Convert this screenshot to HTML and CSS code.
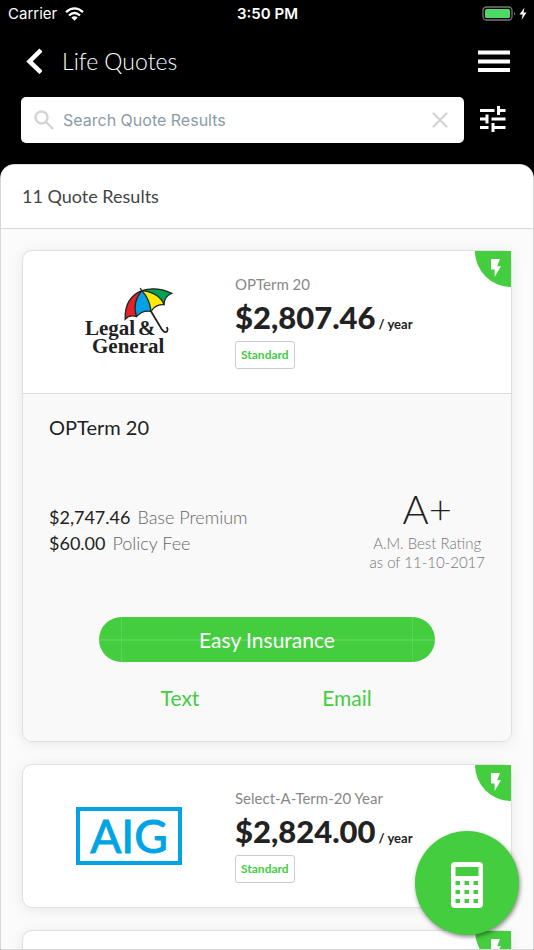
FILE: index.html
```html
<!DOCTYPE html>
<html lang="en">
<head>
<meta charset="utf-8">
<meta name="viewport" content="width=device-width, initial-scale=1">
<title>Life Quotes</title>
<link rel="stylesheet" href="styles.css">
</head>
<body>
<svg class="defs" aria-hidden="true">
  <symbol id="bolt" viewBox="0 0 10 18"><path d="M0 0h9L6.200 7.200H10L3.600 18V10.500H0z" fill="currentColor"/></symbol>
</svg>
<div class="app">
  <header class="top">
    <div class="status">
      <div class="carrier">
        <span>Carrier</span>
        <svg width="19" height="14" viewBox="0 0 19 14" fill="none" stroke="#fff" stroke-width="2.300"><path d="M1 5.200Q9.500-2.400 18 5.200"/><path d="M4 8.500Q9.500 3.500 15 8.500"/><path d="M6.300 10.600Q9.500 7.800 12.700 10.600L9.500 13.800z" fill="#fff" stroke="none"/></svg>
      </div>
      <div class="clock">3:50 PM</div>
      <div class="power">
        <svg width="45" height="16" viewBox="0 0 45 16"><rect x="1" y="1" width="29" height="13" rx="3.500" fill="none" stroke="#777" stroke-width="1.300"/><rect x="3" y="3" width="25" height="9" rx="1.500" fill="#4cd964"/><path d="M32 5.500q1.800 2 0 4z" fill="#888"/><path d="M42.500 1.500L37.500 8.500H40.700L39.500 14L44.500 6.500H41.500z" fill="#fff"/></svg>
      </div>
    </div>
    <div class="nav">
      <button class="icon-btn" type="button" aria-label="Back"><svg width="18" height="26" viewBox="0 0 18 26"><path d="M17 2L5.500 13.500l11.500 11" fill="none" stroke="#fff" stroke-width="4.500"/></svg></button>
      <h1>Life Quotes</h1>
      <button class="icon-btn menu" type="button" aria-label="Menu"><svg width="32" height="22" viewBox="0 0 32 22" fill="#fff"><path d="M0 .5h32v4H0zM0 9.500h32v4H0zM0 18h32v4H0z"/></svg></button>
    </div>
    <div class="tools">
      <div class="search">
        <label for="q" aria-label="Search"><svg width="20" height="20" viewBox="0 0 20 20" fill="none" stroke="#d2d2d2" stroke-width="2.300"><circle cx="7.500" cy="7.500" r="6"/><path d="M12 12l7 7"/></svg></label>
        <input id="q" type="text" placeholder="Search Quote Results">
        <button class="icon-btn" type="button" aria-label="Clear"><svg width="16" height="16" viewBox="0 0 16 16" stroke="#d2d2d2" stroke-width="2"><path d="M1 1l14 14M15 1L1 15"/></svg></button>
      </div>
      <button class="icon-btn filter" type="button" aria-label="Filter"><svg width="26" height="26" viewBox="0 0 26 26" fill="#fff"><path d="M0 3h14.500v3H0zM17 0h3v3h5.500v3H20v3h-3zM0 11.500h5.500v-3h3v9h-3v-3H0zM11.500 11.500h14v3h-14zM0 20h8.500v3H0zM11.500 17h3v3h11v3h-11v3h-3z"/></svg></button>
    </div>
  </header>
  <main class="panel">
    <h2>11 Quote Results</h2>
    <div class="list">
      <article class="card">
        <div class="corner"><svg width="10" height="18"><use href="#bolt"/></svg></div>
        <div class="summary">
          <div class="brand">
            <svg width="90" height="74" viewBox="0 -1 90 74">
              <g transform="translate(12.500 1) scale(1.040)">
                <path d="M43.500 3.500Q27 10 27.500 31Q32 26 38.500 28.500Q34 15 43.500 3.500" fill="#e22228"/>
                <path d="M43.500 3.500Q34 15 38.500 28.500Q44 22 52.500 23.500Q51 11 43.500 3.500" fill="#00a0e4"/>
                <path d="M43.500 3.500Q51 11 52.500 23.500Q57 16 65 17Q60 5 43.500 3.500" fill="#ffeb0a"/>
                <path d="M43.500 3.500Q57-1 72.500 6Q65 9 65 17Q60 5 43.500 3.500" fill="#05a451"/>
                <g fill="none" stroke="#222" stroke-width="1.200"><path d="M42 1l1.500 2.500Q27 10 27.500 31Q32 26 38.500 28.500Q44 22 52.500 23.500Q57 16 65 17Q65 9 72.500 6Q57-1 43.500 3.500"/><path d="M43.500 3.500Q34 15 38.500 28.500M43.500 3.500Q51 11 52.500 23.500M43.500 3.500Q60 5 65 17"/><path d="M52.500 23.500L63 41q3 4 5 1.500q1-2-.5-4" stroke-width="1.700"/></g>
              </g>
              <text class="legal" x="1" y="49">Legal</text>
              <text class="legal" x="54" y="49">&amp;</text>
              <text class="legal" x="8" y="67">General</text>
            </svg>
          </div>
          <div class="offer">
            <p class="plan">OPTerm 20</p>
            <p class="price">$2,807.46<small>/ year</small></p>
            <span class="tag">Standard</span>
          </div>
        </div>
        <div class="detail">
          <h3>OPTerm 20</h3>
          <div class="facts">
            <dl>
              <div><dt>$2,747.46</dt><dd>Base Premium</dd></div>
              <div><dt>$60.00</dt><dd>Policy Fee</dd></div>
            </dl>
            <div class="rating"><strong>A+</strong><p>A.M. Best Rating<br>as of 11-10-2017</p></div>
          </div>
          <button class="cta" type="button"><span>Easy Insurance</span></button>
          <div class="links"><a href="#text">Text</a><a href="#email">Email</a></div>
        </div>
      </article>
      <article class="card">
        <div class="corner"><svg width="10" height="18"><use href="#bolt"/></svg></div>
        <div class="summary">
          <div class="brand"><div class="aig">AIG</div></div>
          <div class="offer">
            <p class="plan">Select-A-Term-20 Year</p>
            <p class="price">$2,824.00<small>/ year</small></p>
            <span class="tag">Standard</span>
          </div>
        </div>
      </article>
      <article class="card">
        <div class="corner"><svg width="10" height="18"><use href="#bolt"/></svg></div>
        <div class="summary"></div>
      </article>
    </div>
  </main>
  <button class="fab" type="button" aria-label="Calculator"><svg width="32" height="46" viewBox="0 0 32 46"><rect width="32" height="46" rx="4" fill="#fff"/><path d="M4.500 5h23v9h-23zM4.500 19H9v4H4.500zM13.500 19H18v4h-4.500zM22.500 19H27v4h-4.500zM4.500 28H9v4H4.500zM13.500 28H18v4h-4.500zM22.500 28H27v4h-4.500zM4.500 37H9v4H4.500zM13.500 37H18v4h-4.500zM22.500 37H27v4h-4.500z" fill="#43cd3f"/></svg></button>
</div>
</body>
</html>
```
FILE: styles.css
```css
* { box-sizing: border-box; margin: 0; padding: 0; }
body { background: #000; font-family: Lato, sans-serif; color: #222; }
button { border: 0; background: none; font: inherit; color: inherit; cursor: pointer; }
svg { display: block; }
.defs { display: none; }
.app { height: 100vh; display: flex; flex-direction: column; position: relative; }

.top { color: #fff; padding-bottom: 21px; }
.status { display: grid; grid-template-columns: 1fr auto 1fr; align-items: center; height: 28px; padding: 0 7px 0 8px; font: 15px/28px Inter, sans-serif; }
.carrier { display: flex; align-items: center; gap: 8px; }
.clock { font-weight: 600; }
.power { justify-self: end; }
.nav { display: flex; align-items: center; height: 69px; padding: 0 24px 3px; }
.nav h1 { flex: 1; font-size: 23px; font-weight: 300; padding-left: 20px; }
.tools { display: flex; align-items: center; gap: 16px; padding: 0 28px 0 21px; }
.filter { padding-bottom: 3px; }
.search { flex: 1; display: flex; align-items: center; gap: 9px; height: 46px; padding: 0 16px 0 13px; background: #fff; border-radius: 5px; }
.search input { flex: 1; min-width: 0; border: 0; outline: 0; background: none; font: 16px/24px Inter, sans-serif; color: #333; }
.search input::placeholder { color: #8a9ba8; opacity: 1; }

.panel { flex: 1; min-height: 0; display: flex; flex-direction: column; background: #fbfbfb; border: 1px solid #d8d8d8; border-radius: 14px 14px 0 0; overflow: hidden; }
.panel h2 { background: #fff; border-bottom: 1px solid #d8d8d8; font-size: 18px; line-height: 63px; font-weight: 400; color: #444; padding: 0 21px; }
.list { flex: 1; min-height: 0; overflow-y: auto; scrollbar-width: none; padding: 21px; display: flex; flex-direction: column; gap: 22px; }
.card { flex: none; position: relative; background: #fff; border: 1px solid #e0e0e0; border-radius: 10px; box-shadow: 0 2px 14px rgba(0, 0, 0, .08); }
.corner { position: absolute; top: 0; right: 0; width: 36px; height: 36px; border-bottom-left-radius: 36px; background: #43cd3f; color: #fff; display: flex; align-items: center; justify-content: center; padding: 0 0 2px 5px; }
.summary { display: grid; grid-template-columns: 212px 1fr; align-items: center; height: 142px; }
.brand { display: flex; justify-content: center; }
.legal { font: 700 21px "Liberation Serif", serif; fill: #222; }
.aig { width: 106px; height: 58px; border: 4px solid #00a4e4; color: #00a4e4; font-size: 46px; line-height: 50px; text-align: center; -webkit-text-stroke: 1px #00a4e4; }
.offer { padding-bottom: 2px; }
.plan { font-size: 15px; line-height: 20px; color: #888; }
.price { font-size: 31px; line-height: 36px; font-weight: 900; margin: 5px 0 6px; }
.price small { font-size: 13px; line-height: 1; font-weight: 700; margin-left: 3px; }
.tag { display: block; width: fit-content; border: 1px solid #ccc; border-radius: 3px; padding: 0 5px; font-size: 12px; line-height: 26px; font-weight: 700; color: #43cd3f; }

.detail { border-top: 1px solid #d8d8d8; background: #f9f9f9; border-radius: 0 0 10px 10px; padding: 19px 26px 29px; }
.detail h3 { font-size: 20px; line-height: 28px; font-weight: 400; }
.facts { display: flex; justify-content: space-between; align-items: center; margin: 46px 0 45px; }
.facts dl > div { display: flex; gap: 7px; font-size: 18px; line-height: 26px; }
.facts dd { font-weight: 300; color: #666; }
.rating { text-align: center; }
.rating strong { display: block; font-size: 40px; line-height: 44px; font-weight: 300; margin-bottom: 3px; }
.rating p { font-size: 15px; line-height: 19px; font-weight: 300; color: #777; }
.cta { display: block; width: 336px; max-width: 100%; height: 45px; margin: 0 auto; border-radius: 23px; background: linear-gradient(#5bd357, #5bd357) center / 100% 2px no-repeat #43cd3f; color: #fff; font-size: 21px; }
.cta span { display: block; height: 100%; margin: 0 22px; line-height: 45px; border: solid #5bd357; border-width: 0 1px; }
.links { display: flex; justify-content: center; margin-top: 22px; padding-right: 7px; }
.links a { width: 167px; text-align: center; font-size: 21px; line-height: 28px; color: #43cd3f; text-decoration: none; }
.fab { position: absolute; right: 15px; bottom: 15px; width: 104px; height: 104px; border-radius: 50%; background: #43cd3f; display: flex; align-items: center; justify-content: center; padding-top: 4px; box-shadow: 1px 2px 4px rgba(0, 0, 0, .45); }
```
